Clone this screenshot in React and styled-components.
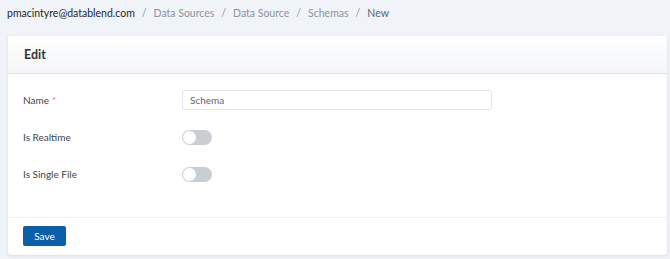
import React from 'react';
import styled, { createGlobalStyle } from 'styled-components';

const GlobalStyle = createGlobalStyle`
    body {
        margin: 0;
        background: #f0f3f7;
        font-family: Lato, "Liberation Sans", sans-serif;
        color: #23282c;
    }
`

const Page = styled.div`
    width: 670px;
    height: 259px;
    overflow: hidden;
`

const Crumbs = styled.ol`
    display: flex;
    align-items: center;
    list-style: none;
    margin: 0;
    padding: 2px 0 0 7px;
    height: 21px;
    font-size: 10.5px;
`

const Crumb = styled.li`
    color: ${props => props.tone === 'dark' ? '#23282c' : props.tone === 'active' ? '#5c6873' : '#8a93a2'};

    &:not(:first-child)::before {
        content: '/';
        color: #8a93a2;
        padding: 0 7px;
    }
`

const Card = styled.div`
    margin: 13px 3px 0 8px;
    background: #fff;
    border-radius: 3px;
    box-shadow: 0 1px 3px rgba(40, 60, 90, 0.12);
`

const CardHeader = styled.div`
    height: 37px;
    display: flex;
    align-items: center;
    padding: 0 16px;
    font-size: 12.5px;
    font-weight: 700;
    color: #2f353a;
    background: linear-gradient(#fff, #f4f6f9);
    border-bottom: 1px solid #dfe4ea;
    border-radius: 3px 3px 0 0;
`

const CardBody = styled.div`
    padding: 16px 15px 33px;
    display: flex;
    flex-direction: column;
    gap: 17px;
`

const Row = styled.div`
    display: grid;
    grid-template-columns: 159px 310px;
    align-items: center;
    height: 20px;
`

const Label = styled.label`
    font-size: 10px;
    color: #3e4449;
`

const Required = styled.span`
    color: #f86c6b;
    margin-left: 3px;
`

const Input = styled.input`
    box-sizing: border-box;
    height: 20px;
    width: 310px;
    padding: 0 7px;
    border: 1px solid #e4e7ea;
    border-radius: 2px;
    font-family: inherit;
    font-size: 10px;
    color: #5c6873;
    outline: none;
`

const Switch = styled.span`
    position: relative;
    display: inline-block;
    width: 30px;
    height: 15px;
    border-radius: 8px;
    background: #c8ced3;

    &::after {
        content: '';
        position: absolute;
        top: 1px;
        left: 1px;
        width: 13px;
        height: 13px;
        border-radius: 50%;
        background: #fff;
    }
`

const CardFooter = styled.div`
    border-top: 1px solid #edf0f3;
    padding: 8px 15px 9px;
`

const SaveButton = styled.button`
    display: block;
    height: 20px;
    width: 43px;
    border: 0;
    border-radius: 2px;
    background: #0b5ea8;
    color: #fff;
    font-family: inherit;
    font-size: 10px;
    padding: 0;
`

const App = () => {
    return (
        <Page>
            <GlobalStyle />
            <Crumbs>
                <Crumb tone="dark">pmacintyre@datablend.com</Crumb>
                <Crumb>Data Sources</Crumb>
                <Crumb>Data Source</Crumb>
                <Crumb>Schemas</Crumb>
                <Crumb tone="active">New</Crumb>
            </Crumbs>
            <Card>
                <CardHeader>Edit</CardHeader>
                <CardBody>
                    <Row>
                        <Label>Name<Required>*</Required></Label>
                        <Input defaultValue="Schema" />
                    </Row>
                    <Row>
                        <Label>Is Realtime</Label>
                        <Switch />
                    </Row>
                    <Row>
                        <Label>Is Single File</Label>
                        <Switch />
                    </Row>
                </CardBody>
                <CardFooter>
                    <SaveButton>Save</SaveButton>
                </CardFooter>
            </Card>
        </Page>
    )
}

export default App
